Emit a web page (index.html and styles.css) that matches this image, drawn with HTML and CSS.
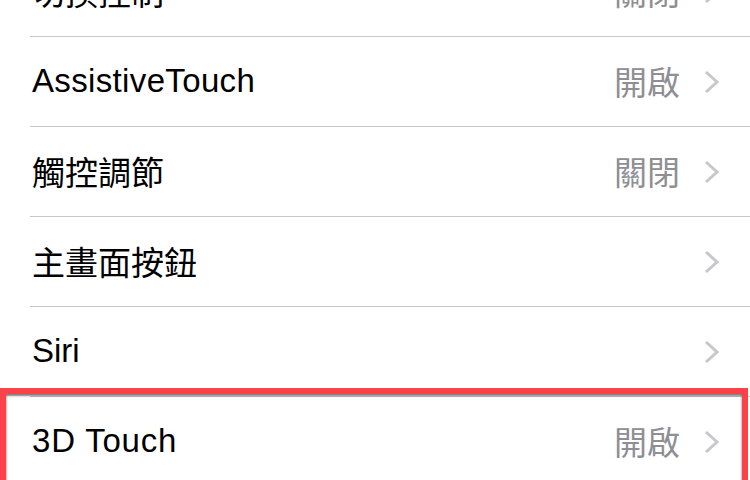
FILE: index.html
```html
<!DOCTYPE html>
<html lang="zh-Hant">
<head>
	<meta charset="UTF-8">
	<meta name="viewport" content="width=device-width, initial-scale=1.0">
	<title>輔助使用</title>
	<link rel="stylesheet" href="styles.css">
</head>
<body>
	<ul class="settings">
		<li class="row">
			<span class="label">切換控制</span>
			<span class="value">關閉</span>
			<svg class="chevron" viewBox="0 0 16 24"><path d="M2 2 L13 12 L2 22"/></svg>
		</li>
		<li class="row">
			<span class="label latin">AssistiveTouch</span>
			<span class="value">開啟</span>
			<svg class="chevron" viewBox="0 0 16 24"><path d="M2 2 L13 12 L2 22"/></svg>
		</li>
		<li class="row">
			<span class="label">觸控調節</span>
			<span class="value">關閉</span>
			<svg class="chevron" viewBox="0 0 16 24"><path d="M2 2 L13 12 L2 22"/></svg>
		</li>
		<li class="row">
			<span class="label">主畫面按鈕</span>
			<span class="value"></span>
			<svg class="chevron" viewBox="0 0 16 24"><path d="M2 2 L13 12 L2 22"/></svg>
		</li>
		<li class="row">
			<span class="label">Siri</span>
			<span class="value"></span>
			<svg class="chevron" viewBox="0 0 16 24"><path d="M2 2 L13 12 L2 22"/></svg>
		</li>
		<li class="row">
			<span class="label latin wide">3D Touch</span>
			<span class="value">開啟</span>
			<svg class="chevron" viewBox="0 0 16 24"><path d="M2 2 L13 12 L2 22"/></svg>
		</li>
	</ul>
	<div class="highlight"></div>
</body>
</html>
```

FILE: styles.css
```css
*, *:before, *:after {
	box-sizing: border-box;
}
html, body {
	margin: 0;
	height: 480px;
	overflow: hidden;
	background: #fff;
}
body {
	font-family: "Liberation Sans", "Noto Sans CJK TC", sans-serif;
	position: relative;
}
.settings {
	list-style: none;
	margin: -53px 0 0 0;
	padding: 0;
}
.row {
	display: flex;
	align-items: center;
	height: 90px;
	margin-left: 30px;
	padding: 0 30px 0 2px;
	border-bottom: 1px solid #c8c7cc;
	font-size: 33px;
}
.label {
	flex: 1;
	color: #000;
	padding-bottom: 2px;
}
.latin {
	letter-spacing: 0.35px;
}
.wide {
	letter-spacing: 0.8px;
}
.value {
	color: #8e8e93;
	margin-right: 24px;
	padding-bottom: 2px;
}
.chevron {
	width: 16px;
	height: 24px;
	fill: none;
	stroke: #c7c7cc;
	stroke-width: 3;
}
.highlight {
	position: absolute;
	left: 0;
	top: 388px;
	width: 748px;
	height: 120px;
	border: 6px solid #fc4149;
	box-shadow: inset 0 2px 2px rgba(0, 0, 0, 0.45), inset 0 0 3px rgba(0, 0, 0, 0.25);
}
```
